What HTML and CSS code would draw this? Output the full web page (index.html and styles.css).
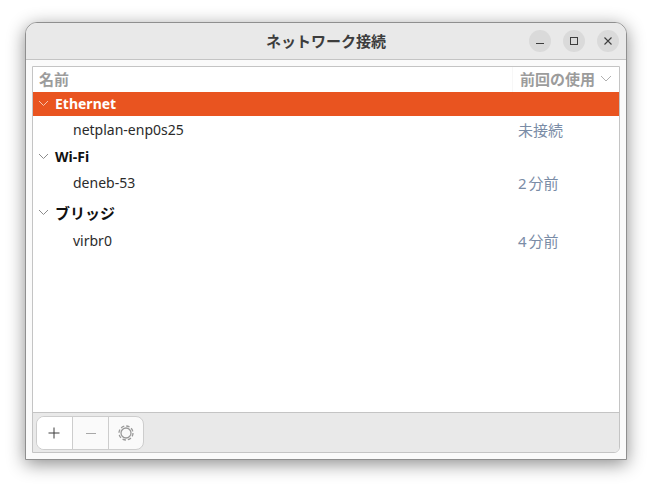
FILE: index.html
```html
<!DOCTYPE html>
<html lang="ja">
<head>
<meta charset="utf-8">
<title>ネットワーク接続</title>
<link rel="stylesheet" href="styles.css">
</head>
<body>
<div class="window">
  <header class="titlebar">
    <div class="title">ネットワーク接続</div>
    <div class="controls">
      <button class="ctl"><svg width="12" height="12" viewBox="0 0 12 12"><path d="M2 8.500h8" stroke="#3d3d3d" stroke-width="1"/></svg></button>
      <button class="ctl"><svg width="12" height="12" viewBox="0 0 12 12"><rect x="2.500" y="2.500" width="7" height="7" fill="none" stroke="#3d3d3d"/></svg></button>
      <button class="ctl"><svg width="12" height="12" viewBox="0 0 12 12"><path d="M2.500 2.500l7 7M9.500 2.500l-7 7" stroke="#3d3d3d" stroke-width="1.100"/></svg></button>
    </div>
  </header>
  <main class="body">
    <div class="frame">
      <div class="list">
        <div class="head">
          <div class="col-name">名前</div>
          <div class="col-used">前回の使用<svg class="sort" width="12" height="7" viewBox="0 0 12 7"><path d="M1 1l5 5 5-5" fill="none" stroke="#b0b0b0"/></svg></div>
        </div>
        <div class="row group selected h-eth">
          <svg class="chev" width="11" height="7" viewBox="0 0 11 7"><path d="M1 1l4.500 4.500L10 1" fill="none" stroke="currentColor"/></svg>
          <span>Ethernet</span>
        </div>
        <div class="row item h-net"><span class="name">netplan-enp0s25</span><span class="used">未接続</span></div>
        <div class="row group h-wifi">
          <svg class="chev" width="11" height="7" viewBox="0 0 11 7"><path d="M1 1l4.500 4.500L10 1" fill="none" stroke="currentColor"/></svg>
          <span>Wi-Fi</span>
        </div>
        <div class="row item h-deneb"><span class="name">deneb-53</span><span class="used">2 分前</span></div>
        <div class="row group h-bridge">
          <svg class="chev" width="11" height="7" viewBox="0 0 11 7"><path d="M1 1l4.500 4.500L10 1" fill="none" stroke="currentColor"/></svg>
          <span class="cjk">ブリッジ</span>
        </div>
        <div class="row item h-virb"><span class="name">virbr0</span><span class="used">4 分前</span></div>
      </div>
      <footer class="toolbar">
        <div class="btns">
          <button class="tb tb-add"><svg width="14" height="14" viewBox="0 0 14 14"><path d="M7 1.500v11M1.500 7h11" stroke="#3d3d3d" stroke-width="1"/></svg></button>
          <button class="tb tb-remove"><svg width="14" height="14" viewBox="0 0 14 14"><path d="M2 7.500h10" stroke="#a8a8a8" stroke-width="1"/></svg></button>
          <button class="tb"><svg width="18" height="18" viewBox="0 0 18 18"><circle cx="9" cy="9" r="5" fill="none" stroke="#9a9a9a" stroke-width="1.300"/><circle cx="9" cy="9" r="7" fill="none" stroke="#9a9a9a" stroke-width="1.300" stroke-dasharray="3.500 2"/></svg></button>
        </div>
      </footer>
    </div>
  </main>
</div>
</body>
</html>
```
FILE: styles.css
```css
* { box-sizing: border-box; }
html, body { margin: 0; height: 100%; background: #fff; }
body {
  padding: 22px 25px 29px;
  font-family: "Noto Sans", "Noto Sans CJK JP", sans-serif;
  font-size: 14px;
  color: #1c1c1c;
}
.window {
  width: 602px;
  height: 438px;
  display: flex;
  flex-direction: column;
  background: #fafafa;
  border: 1px solid #8f8f8f;
  border-radius: 12px 12px 0 0;
  box-shadow: 0 4px 18px rgba(0,0,0,.45);
  overflow: hidden;
}
.titlebar {
  height: 37px;
  flex: none;
  display: flex;
  align-items: center;
  justify-content: center;
  position: relative;
  background: #e9e9e9;
  border-bottom: 1px solid #c4c4c4;
  padding-bottom: 2px;
}
.title { font-weight: 700; font-size: 15px; color: #3d3d3d; }
.controls {
  position: absolute;
  right: 7px;
  top: 7px;
  display: flex;
  gap: 12px;
}
.ctl {
  width: 22px;
  height: 22px;
  padding: 0;
  border: 0;
  border-radius: 50%;
  background: #dadada;
  display: flex;
  align-items: center;
  justify-content: center;
}
.body { flex: 1; display: flex; padding: 6px; min-height: 0; }
.frame {
  flex: 1;
  display: flex;
  flex-direction: column;
  border: 1px solid #c4c4c4;
  border-radius: 0 0 6px 0;
  background: #fff;
  overflow: hidden;
}
.list { flex: 1; min-height: 0; }
.head {
  height: 25px;
  display: flex;
  align-items: center;
  justify-content: space-between;
  font-weight: 700;
  font-size: 15px;
  color: #9c9c9c;
}
.col-name { padding: 0 0 3px 6px; }
.col-used {
  width: 107px;
  height: 100%;
  display: flex;
  align-items: center;
  gap: 5px;
  padding: 0 0 3px 7px;
  border-left: 1px solid #f7f7f7;
}
.row { display: flex; align-items: center; }
.group { font-weight: 700; padding-left: 5px; gap: 6px; color: #111; }
.group .chev { color: #8c8c8c; }
.cjk { font-size: 15px; }
.selected { background: #e95420; color: #fff; }
.selected .chev { color: #f6c4ae; }
.item { padding-left: 40px; color: #2b2b2b; }
.name { flex: 1; }
.used { width: 101px; font-size: 15px; word-spacing: -2px; color: #7a8ca6; }
.h-eth { height: 24px; padding-bottom: 1px; }
.h-net { height: 26px; }
.h-wifi { height: 28px; }
.h-deneb { height: 24px; }
.h-bridge { height: 36px; }
.h-virb { height: 20px; }
.toolbar {
  height: 40px;
  flex: none;
  display: flex;
  align-items: center;
  padding-left: 3px;
  background: #e9e9e9;
  border-top: 1px solid #c4c4c4;
}
.btns {
  display: flex;
  height: 34px;
  border: 1px solid #cdcdcd;
  border-radius: 8px;
  background: #fafafa;
  overflow: hidden;
}
.tb {
  width: 35px;
  padding: 0;
  border: 0;
  border-left: 1px solid #cdcdcd;
  background: transparent;
  display: flex;
  align-items: center;
  justify-content: center;
}
.tb:first-child { border-left: 0; background: #fff; }
.tb-add svg { margin-right: 2px; }
.tb-remove { width: 36px; }
```
